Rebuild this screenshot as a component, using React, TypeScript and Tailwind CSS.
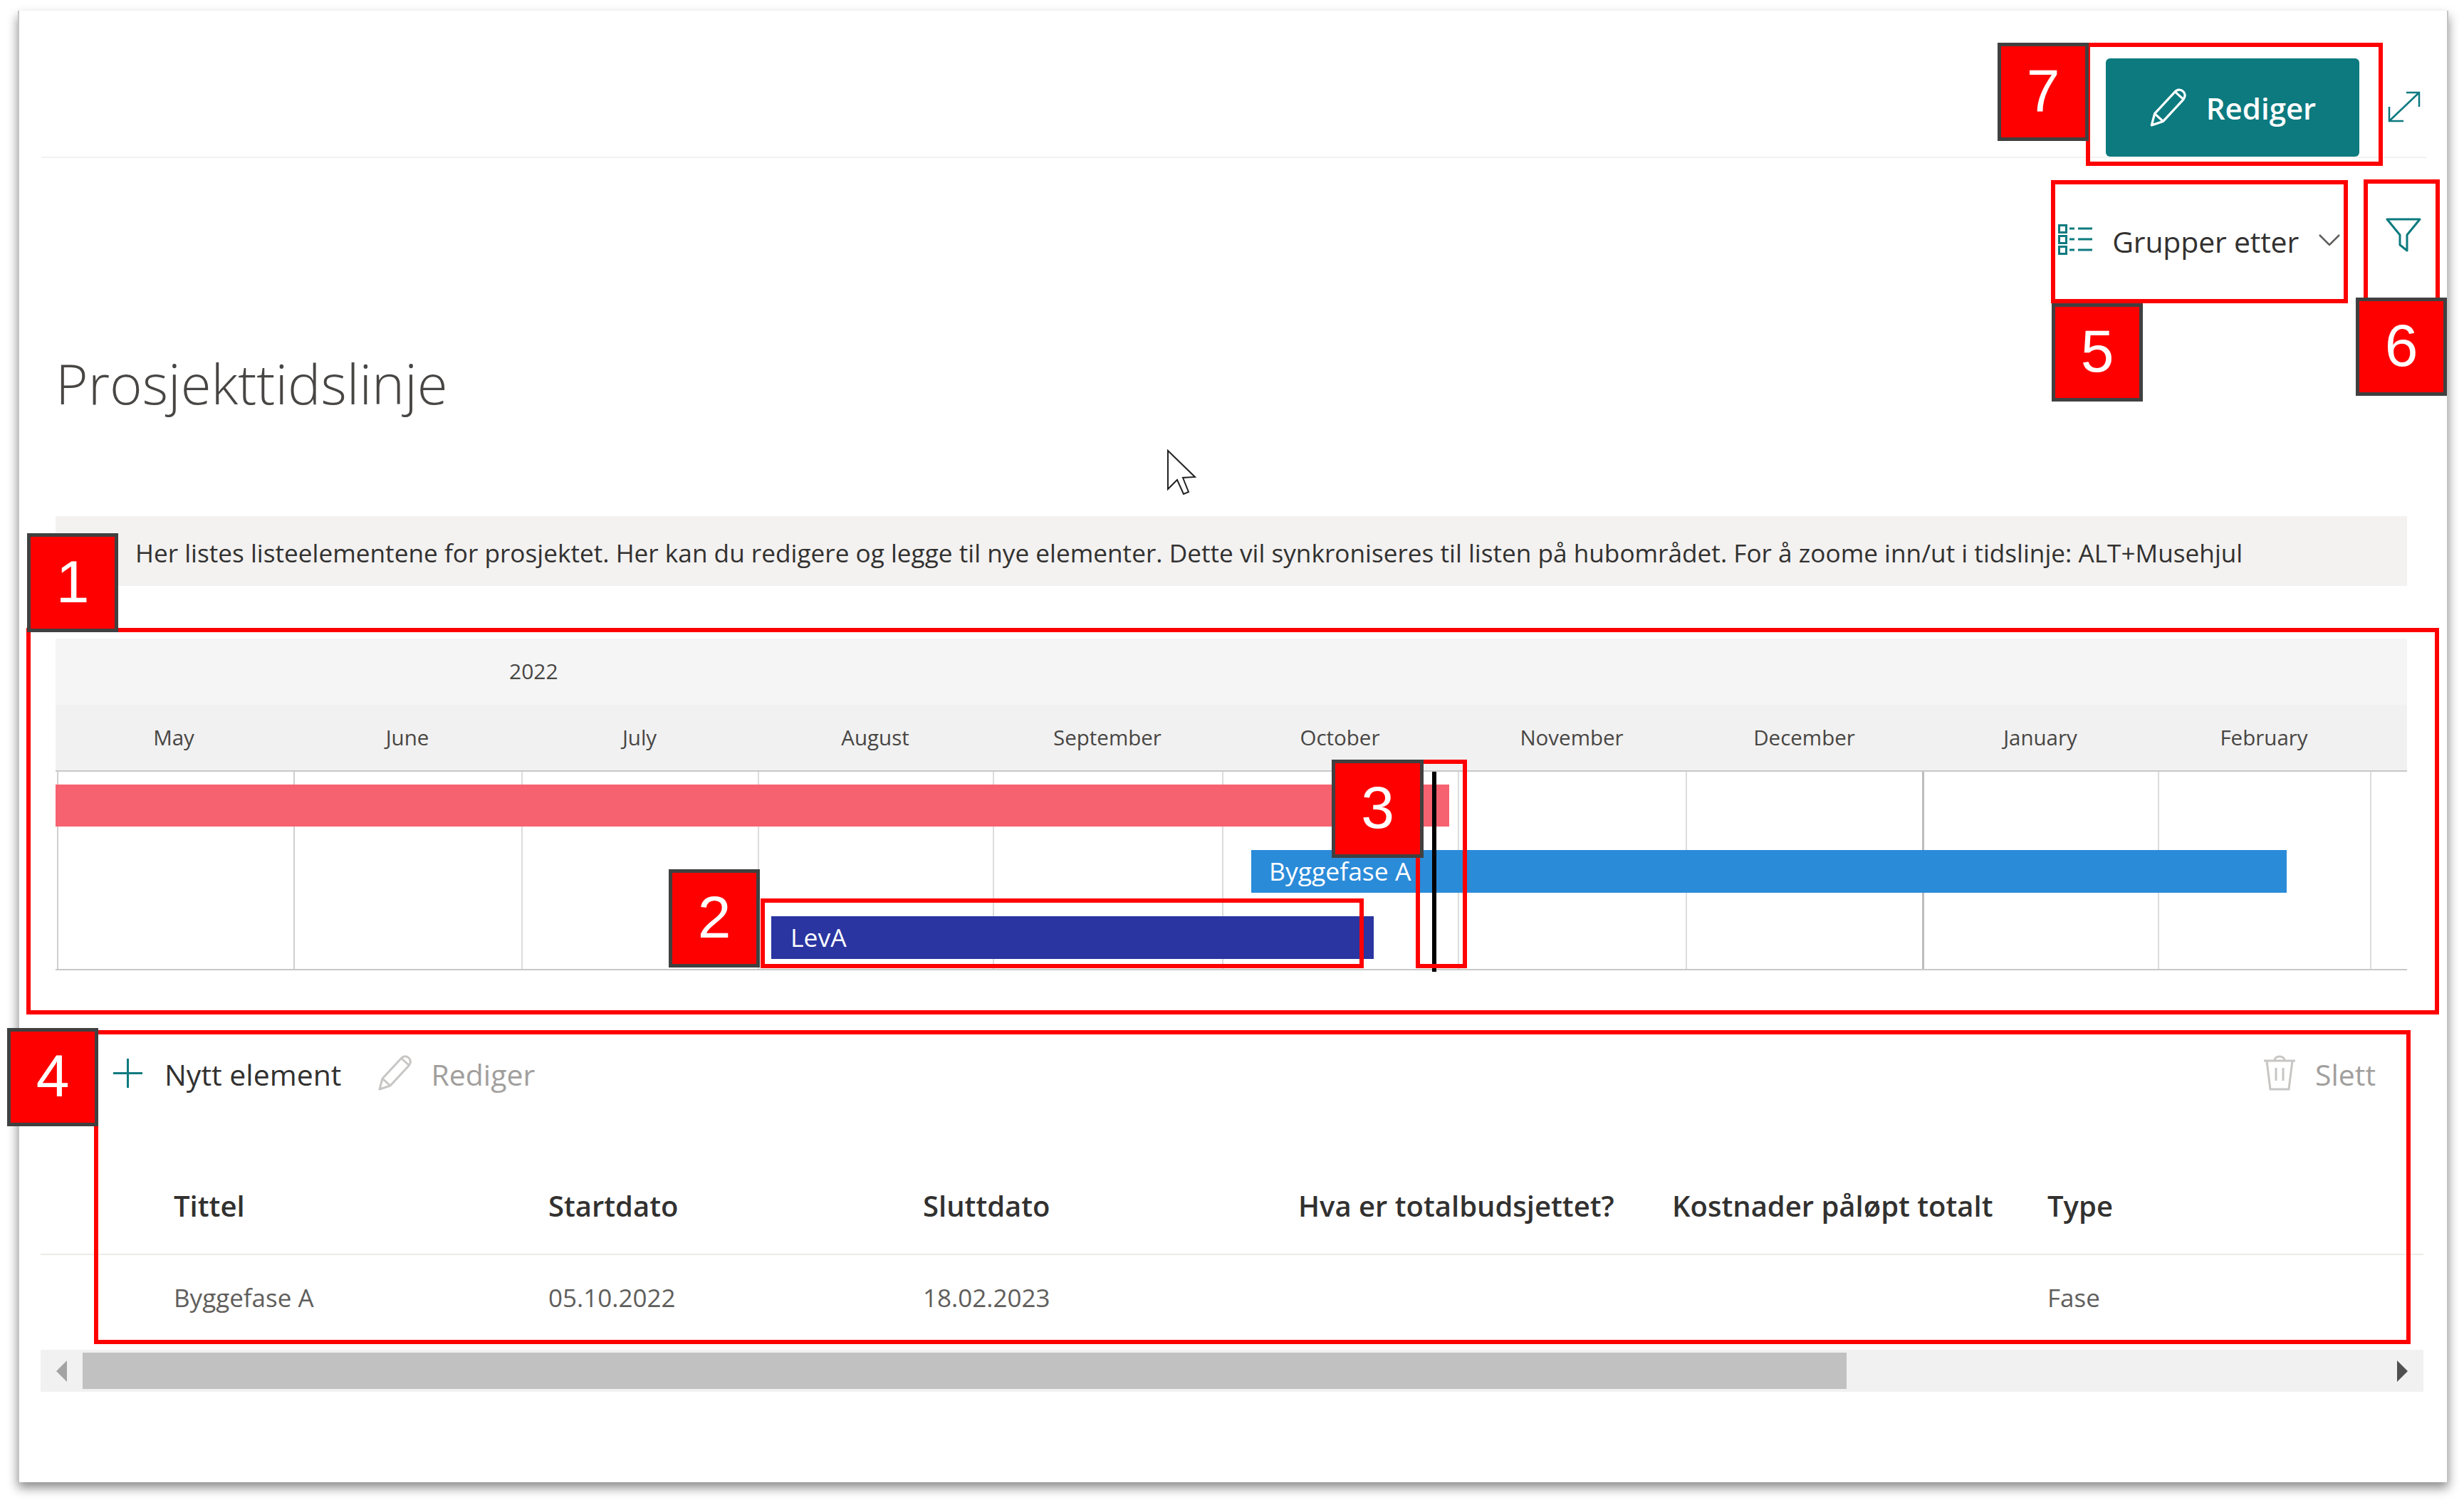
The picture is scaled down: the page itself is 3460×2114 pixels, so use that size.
const font = "font-['Open_Sans',sans-serif]";

const months = ['May', 'June', 'July', 'August', 'September', 'October', 'November', 'December', 'January', 'February', ''];
const columns = 'grid grid-cols-[336px_320px_332px_330px_322px_331px_320px_333px_330px_298px_50px]';

const headers = ['Tittel', 'Startdato', 'Sluttdato', 'Hva er totalbudsjettet?', 'Kostnader påløpt totalt', 'Type'];
const cells = ['Byggefase A', '05.10.2022', '18.02.2023', '', '', 'Fase'];

function PencilIcon({ className }: { className: string }) {
  return (
    <svg className={className} viewBox="0 0 48 50" fill="none" stroke="currentColor" strokeWidth="3" strokeLinejoin="round">
      <path d="M3 48 L7 33 L33 5 C36 1 41 1 44 4 C47 7 47 11 44 15 L18 43 Z" />
      <path d="M7 33 L18 43 M34 5 L44 14" />
    </svg>
  );
}

function GroupIcon() {
  return (
    <svg className="w-[48px] h-[43px] mb-[8px] text-[#0c7a7f]" viewBox="0 0 48 43" fill="none" stroke="currentColor" strokeWidth="3">
      <rect x="1.5" y="1.5" width="10" height="10" />
      <rect x="1.5" y="16.5" width="10" height="10" />
      <rect x="1.5" y="31.5" width="10" height="10" />
      <path d="M16 6 H23 M28 6 H48 M16 21 H23 M28 21 H48 M16 36 H23 M28 36 H48" />
    </svg>
  );
}

function Callout({ className, children }: { className: string; children: string }) {
  return (
    <div className={`absolute flex items-center justify-center pb-[4px] bg-[#ff0000] border-[5px] border-[#404040] text-white text-[84px] leading-none font-['Liberation_Sans',sans-serif] ${className}`}>
      {children}
    </div>
  );
}

function Box({ className }: { className: string }) {
  return <div className={`absolute border-[6px] border-[#ff0000] ${className}`} />;
}

export default function App() {
  return (
    <div className={`relative w-[3460px] h-[2114px] overflow-hidden bg-white text-[#323130] ${font}`}>
      <div className="ml-[25px] mt-[15px] inline-block align-top w-[3413px] h-[2067px] bg-white border-l-2 border-r-2 border-[#c4c4c4] shadow-[0_8px_14px_rgba(0,0,0,0.45)]">
        {/* Command bar */}
        <div className="ml-[31px] w-[3350px] h-[207px] flex items-end justify-end border-b-2 border-[#f3f2f1]">
          <button className="w-[356px] h-[138px] flex items-center justify-center gap-[28px] rounded-[6px] bg-[#0c7a7f] text-white text-[42px] font-semibold">
            <PencilIcon className="w-[52px] h-[54px]" />
            <span>Rediger</span>
          </button>
          <svg className="w-[46px] h-[44px] ml-[40px] mb-[48px] mr-[9px] text-[#0c7a7f]" viewBox="0 0 46 44" fill="none" stroke="currentColor" strokeWidth="2.5">
            <path d="M2 42 L44 2 M26 2 H44 V22 M2 22 V42 H22" />
          </svg>
        </div>

        {/* Group by and filter */}
        <div className="h-[236px] flex items-center justify-end pr-[36px]">
          <GroupIcon />
          <span className="ml-[28px] text-[41px] tracking-[-0.2px]">Grupper etter</span>
          <svg className="w-[30px] h-[16px] mb-[6px] ml-[28px] text-[#605e5c]" viewBox="0 0 30 16" fill="none" stroke="currentColor" strokeWidth="2.5">
            <path d="M1 1 L15 15 L29 1" />
          </svg>
          <svg className="w-[50px] h-[48px] ml-[64px] mb-[20px] text-[#0c7a7f]" viewBox="0 0 50 48" fill="none" stroke="currentColor" strokeWidth="3" strokeLinejoin="round">
            <path d="M2 2 H48 L30 24 V46 L20 38 V24 Z" />
          </svg>
        </div>

        {/* Title */}
        <h1 className="ml-[51px] h-[267px] text-[78px] leading-[160px] font-light text-[#484644]">Prosjekttidslinje</h1>

        {/* Description */}
        <div className="ml-[51px] w-[3302px] h-[98px] pl-[112px] pt-[4px] flex items-center bg-[#f3f2f1] text-[35.2px] text-[#323130] whitespace-nowrap">
          Her listes listeelementene for prosjektet. Her kan du redigere og legge til nye elementer. Dette vil synkroniseres til listen på hubområdet. For å zoome inn/ut i tidslinje: ALT+Musehjul
        </div>

        {/* Timeline */}
        <div className="ml-[51px] w-[3302px] mt-[74px] text-[#484644]">
          <div className="h-[93px] bg-[#f5f5f5] pl-[637px] pt-[26px] text-[30px] leading-[40px]">2022</div>
          <div className={`${columns} h-[94px] bg-[#f1f1f1] border-b-2 border-[#c8c8c8] text-[29.5px]`}>
            {months.map((month, i) => (
              <div key={i} className="flex items-center justify-center pr-[4px]">{month}</div>
            ))}
          </div>
          <div className="relative h-[279px] border-b-2 border-[#c8c8c8]">
            <div className={`${columns} h-full`}>
              {months.map((month, i) => (
                <div
                  key={i}
                  className={
                    i === 0
                      ? 'ml-[2px] border-l-2 border-r-2 border-[#cfcfcf]'
                      : i === 7
                        ? 'border-r-[3px] border-[#bdbdbd]'
                        : i === 10
                          ? ''
                          : 'border-r-2 border-[#dcdcdc]'
                  }
                />
              ))}
            </div>
            {/* Project bar */}
            <div className="absolute left-0 top-[18px] w-[1957px] h-[59px] bg-[#f6626f]" />
            <div className="absolute left-[1679px] top-[110px] w-[1454px] h-[60px] pl-[25px] flex items-center bg-[#2a8bd9] text-white text-[35.5px]">Byggefase A</div>
            <div className="absolute left-[1005px] top-[203px] w-[846px] h-[60px] pl-[27px] flex items-center bg-[#2a35a1] text-white text-[35.5px]">LevA</div>
            {/* Today line */}
            <div className="absolute left-[1933px] top-0 w-[6px] h-[281px] bg-black" />
          </div>
        </div>

        {/* Toolbar */}
        <div className="ml-[32px] w-[3346px] h-[160px] mt-[64px] flex items-center text-[41px]">
          <svg className="ml-[100px] w-[41px] h-[41px] text-[#0c7a7f]" viewBox="0 0 41 41" fill="none" stroke="currentColor" strokeWidth="3">
            <path d="M20.5 0 V41 M0 20.5 H41" />
          </svg>
          <span className="ml-[31px] pt-[5px]">Nytt element</span>
          <PencilIcon className="ml-[51px] w-[48px] h-[50px] text-[#c8c6c4]" />
          <span className="ml-[27px] pt-[5px] text-[#a19f9d]">Rediger</span>
          <div className="ml-auto mr-[69px] flex items-center text-[#a19f9d]">
            <svg className="w-[46px] h-[50px] text-[#c8c6c4]" viewBox="0 0 46 50" fill="none" stroke="currentColor" strokeWidth="3">
              <path d="M1 8 H45 M16 8 C16 0 30 0 30 8 M5 8 L10 48 H36 L41 8 M18 18 V36 M28 18 V36" />
            </svg>
            <span className="ml-[27px] pt-[5px]">Slett</span>
          </div>
        </div>

        {/* List */}
        <div className="ml-[30px] w-[3346px]">
          <div className="h-[176px] border-b-2 border-[#edebe9] pl-[187px] grid grid-cols-[526px_526px_527px_525px_527px_1fr] items-end text-[40px] font-semibold pb-[37px] whitespace-nowrap">
            {headers.map((header) => (
              <div key={header}>{header}</div>
            ))}
          </div>
          <div className="h-[132px] pl-[187px] grid grid-cols-[526px_526px_527px_525px_527px_1fr] items-center text-[35px] text-[#605e5c] pb-[12px]">
            {cells.map((cell, i) => (
              <div key={i}>{cell}</div>
            ))}
          </div>
          {/* Horizontal scrollbar */}
          <div className="h-[59px] mt-[1px] bg-[#f1f1f1] flex items-center">
            <div className="ml-[22px] w-0 h-0 border-y-[15px] border-y-transparent border-r-[15px] border-r-[#a3a3a3]" />
            <div className="ml-[22px] w-[2477px] h-[51px] bg-[#c1c1c1]" />
            <div className="ml-auto mr-[22px] w-0 h-0 border-y-[15px] border-y-transparent border-l-[15px] border-l-[#505050]" />
          </div>
        </div>
      </div>

      {/* Mouse pointer */}
      <svg className="absolute left-[1638px] top-[631px] w-[44px] h-[66px]" viewBox="-2 -2 44 66" fill="white" stroke="#222" strokeWidth="2">
        <path d="M0 0 L38 37 L21 38 L29 58 L22 61 L13 41 L0 54 Z" />
      </svg>

      {/* Annotations */}
      <Box className="left-[37px] top-[882px] w-[3388px] h-[543px]" />
      <Box className="left-[1068px] top-[1262px] w-[847px] h-[98px]" />
      <Box className="left-[1988px] top-[1067px] w-[72px] h-[293px]" />
      <Box className="left-[132px] top-[1447px] w-[3253px] h-[441px]" />
      <Box className="left-[2880px] top-[253px] w-[417px] h-[173px]" />
      <Box className="left-[3319px] top-[252px] w-[107px] h-[175px]" />
      <Box className="left-[2929px] top-[60px] w-[417px] h-[173px]" />
      <Callout className="left-[38px] top-[749px] w-[128px] h-[139px]">1</Callout>
      <Callout className="left-[939px] top-[1221px] w-[128px] h-[138px]">2</Callout>
      <Callout className="left-[1870px] top-[1067px] w-[129px] h-[138px]">3</Callout>
      <Callout className="left-[10px] top-[1444px] w-[128px] h-[138px]">4</Callout>
      <Callout className="left-[2881px] top-[426px] w-[128px] h-[138px]">5</Callout>
      <Callout className="left-[3308px] top-[418px] w-[128px] h-[138px]">6</Callout>
      <Callout className="left-[2805px] top-[60px] w-[128px] h-[138px]">7</Callout>
    </div>
  );
}
